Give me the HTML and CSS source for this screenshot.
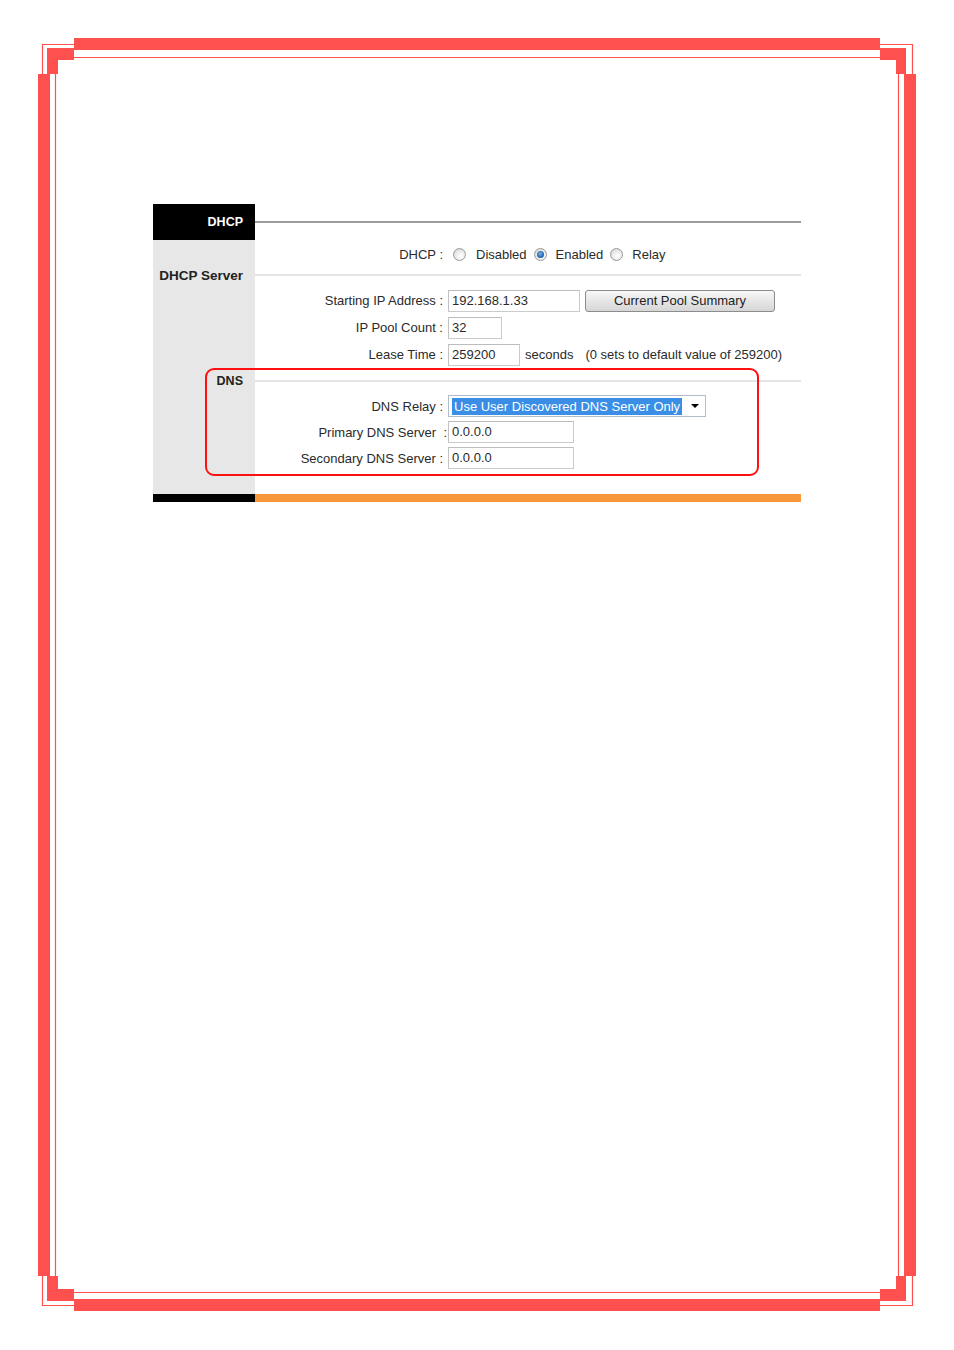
FILE: index.html
```html
<!DOCTYPE html>
<html>
<head>
<meta charset="utf-8">
<title>DHCP</title>
<link rel="stylesheet" href="styles.css">
</head>
<body>
<div class="page">
  <svg class="frame" width="954" height="1350" viewBox="0 0 954 1350" aria-hidden="true">
    <g fill="#ff5050">
      <rect x="74" y="38" width="806" height="12"/>
      <rect x="74" y="1299" width="806" height="12"/>
      <rect x="38" y="74" width="12" height="1202"/>
      <rect x="904" y="74" width="12" height="1202"/>
      <rect x="47" y="48" width="27" height="12"/>
      <rect x="47" y="48" width="11" height="26"/>
      <rect x="880" y="48" width="26" height="12"/>
      <rect x="896" y="48" width="10" height="26"/>
      <rect x="47" y="1289" width="27" height="12"/>
      <rect x="47" y="1276" width="11" height="25"/>
      <rect x="880" y="1289" width="26" height="12"/>
      <rect x="896" y="1276" width="10" height="25"/>
    </g>
    <g stroke="#ff5050" stroke-width="1.2" fill="none">
      <path d="M42.5 74V44.5H74"/>
      <path d="M880 44.5H912.5V74"/>
      <path d="M42.5 1276V1305.5H74"/>
      <path d="M880 1305.5H912.5V1276"/>
      <path d="M74 57.5H880"/>
      <path d="M74 1292.5H880"/>
      <path d="M55.5 74V1276"/>
      <path d="M898.5 74V1276"/>
    </g>
  </svg>

  <div class="panel">
    <div class="side side-dark head">DHCP</div>
    <div class="main head"><span class="rule rule-dark"></span></div>

    <div class="side"></div>
    <div class="main row r-radio">
      <span class="lbl">DHCP :</span>
      <span class="val">
        <span class="radio"></span><span class="opt">Disabled</span>
        <span class="radio on"></span><span class="opt">Enabled</span>
        <span class="radio"></span><span class="opt">Relay</span>
      </span>
    </div>

    <div class="side sec-dhcp"><span class="sec-title big">DHCP Server</span></div>
    <div class="main sec-dhcp"><span class="rule rule-light"></span></div>

    <div class="side"></div>
    <div class="main row r27">
      <span class="lbl">Starting IP Address :</span>
      <span class="val">
        <span class="field w-ip">192.168.1.33</span>
        <span class="btn">Current Pool Summary</span>
      </span>
    </div>

    <div class="side"></div>
    <div class="main row r27">
      <span class="lbl">IP Pool Count :</span>
      <span class="val"><span class="field w-count">32</span></span>
    </div>

    <div class="side"></div>
    <div class="main row r27">
      <span class="lbl">Lease Time :</span>
      <span class="val">
        <span class="field w-lease">259200</span>
        <span class="unit">seconds</span>
        <span class="note">(0 sets to default value of 259200)</span>
      </span>
    </div>

    <div class="side sec-dns"><span class="sec-title">DNS</span></div>
    <div class="main sec-dns"><span class="rule rule-light"></span></div>

    <div class="side"></div>
    <div class="main row r26">
      <span class="lbl">DNS Relay :</span>
      <span class="val">
        <span class="select"><span class="sel-text">Use User Discovered DNS Server Only</span><span class="arrow"></span></span>
      </span>
    </div>

    <div class="side"></div>
    <div class="main row r26">
      <span class="lbl lbl-wide">Primary DNS Server&nbsp; :</span>
      <span class="val"><span class="field w-dns">0.0.0.0</span></span>
    </div>

    <div class="side"></div>
    <div class="main row r26">
      <span class="lbl">Secondary DNS Server :</span>
      <span class="val"><span class="field w-dns">0.0.0.0</span></span>
    </div>

    <div class="side spacer"></div>
    <div class="main spacer"></div>

    <div class="side side-dark foot"></div>
    <div class="main foot foot-orange"></div>

    <div class="highlight"></div>
  </div>
</div>
</body>
</html>
```

FILE: styles.css
```css
html, body {
  margin: 0;
  padding: 0;
  background: #ffffff;
}

.page {
  position: relative;
  width: 954px;
  height: 1350px;
  box-sizing: border-box;
  padding: 204px 0 0 153px;
  font-family: "Liberation Sans", Arial, sans-serif;
  font-size: 13px;
  color: #2a2a2a;
}

.frame {
  position: absolute;
  left: 0;
  top: 0;
  pointer-events: none;
}

.panel {
  position: relative;
  width: 648px;
  display: grid;
  grid-template-columns: 102px 546px;
}

.side {
  background: #e7e7e7;
  text-align: right;
  padding-right: 12px;
  box-sizing: border-box;
  font-weight: bold;
  font-size: 12.5px;
  color: #222;
}

.side-dark {
  background: #000;
  color: #fff;
}

.head {
  height: 36px;
  line-height: 36px;
}

.main.head {
  display: flex;
  align-items: center;
}

.rule {
  display: block;
  width: 100%;
  height: 2px;
}

.rule-dark {
  background: #9c9c9c;
}

.rule-light {
  background: #e6e6e6;
}

.sec-title {
  display: block;
  line-height: 16px;
}

.sec-title.big {
  font-size: 13.5px;
}

.sec-dhcp {
  height: 19px;
}

.main.sec-dhcp {
  padding-top: 6px;
  box-sizing: border-box;
}

.sec-dns {
  height: 25px;
}

.side.sec-dns .sec-title {
  margin-top: 5px;
}

.main.sec-dns {
  padding-top: 12px;
  box-sizing: border-box;
}

.row {
  display: flex;
  align-items: center;
}

.r-radio {
  height: 28px;
}

.r27 {
  height: 27px;
}

.r26 {
  height: 26px;
}

.lbl {
  width: 188px;
  flex: none;
  text-align: right;
  white-space: pre;
}

.lbl-wide {
  margin-right: -4px;
  width: 192px;
}

.val {
  margin-left: 5px;
  display: flex;
  align-items: center;
  white-space: nowrap;
}

.radio {
  width: 13px;
  height: 13px;
  box-sizing: border-box;
  border-radius: 50%;
  border: 1px solid #9a9a9a;
  background: radial-gradient(circle at 60% 65%, #ffffff 0, #f2f2f2 35%, #cfcfcf 100%);
  margin: 0 9px 0 7px;
  flex: none;
  position: relative;
}

.r-radio .val .radio:first-child {
  margin-left: 5px;
  margin-right: 10px;
}

.radio.on::after {
  content: "";
  position: absolute;
  left: 2px;
  top: 2px;
  width: 7px;
  height: 7px;
  border-radius: 50%;
  background: radial-gradient(circle at 45% 40%, #7fb5ea 0, #2a6cb5 55%, #173e73 100%);
}

.field {
  display: block;
  height: 22px;
  line-height: 20px;
  box-sizing: border-box;
  border: 1px solid #cbcbcb;
  border-top-color: #bdbdbd;
  border-left-color: #c2c2c2;
  padding: 0 3px;
  background: #fff;
}

.w-ip { width: 132px; }
.w-count { width: 54px; }
.w-lease { width: 72px; }
.w-dns { width: 126px; }

.btn {
  display: block;
  margin-left: 5px;
  width: 190px;
  height: 22px;
  line-height: 20px;
  box-sizing: border-box;
  border: 1px solid #8c8c8c;
  border-radius: 3px;
  background: linear-gradient(#f8f8f8, #e6e6e6 50%, #d6d6d6);
  text-align: center;
  color: #222;
}

.unit {
  margin-left: 5px;
}

.note {
  margin-left: 12px;
}

.select {
  display: flex;
  align-items: center;
  width: 258px;
  height: 22px;
  box-sizing: border-box;
  border: 1px solid #b3bccb;
  background: #fff;
  position: relative;
}

.sel-text {
  margin-left: 3px;
  height: 17px;
  line-height: 17px;
  padding: 0 2px;
  background: #3a8ee6;
  color: #fff;
}

.arrow {
  position: absolute;
  right: 6px;
  top: 8px;
  width: 0;
  height: 0;
  border-left: 4px solid transparent;
  border-right: 4px solid transparent;
  border-top: 4px solid #000;
}

.spacer {
  height: 23px;
}

.foot {
  height: 8px;
}

.foot-orange {
  background: #f8983a;
}

.highlight {
  position: absolute;
  left: 52px;
  top: 164px;
  width: 554px;
  height: 108px;
  box-sizing: border-box;
  border: 2px solid #ff1010;
  border-radius: 9px;
  pointer-events: none;
}
```
